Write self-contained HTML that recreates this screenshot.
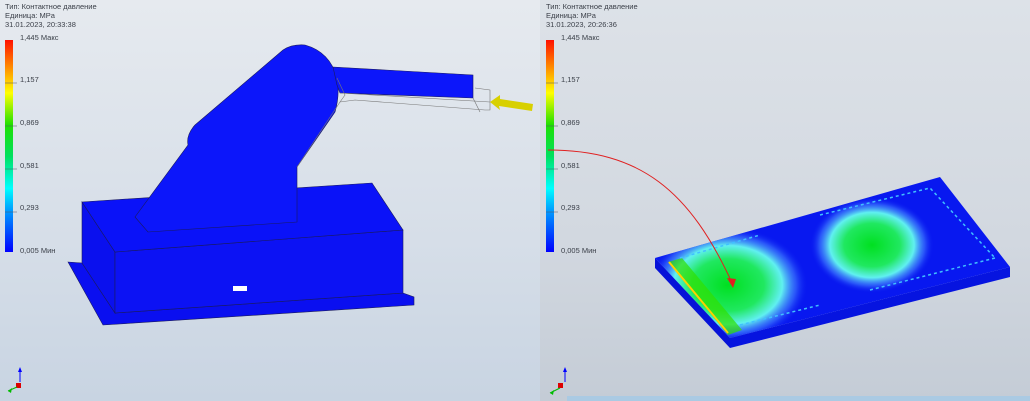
<!DOCTYPE html>
<html><head><meta charset="utf-8"><style>
body{margin:0;width:1030px;height:401px;overflow:hidden;font-family:"Liberation Sans","DejaVu Sans",sans-serif}
.p{position:absolute;top:0;height:401px}
.t{position:absolute;font-size:7.5px;color:#3a3f48;line-height:9px;white-space:nowrap}
</style></head><body>
<div class="p" style="left:0;width:540px;background:linear-gradient(180deg,#e6eaef 0%,#d6dee8 60%,#c8d4e2 100%)"></div>
<div class="p" style="left:540px;width:490px;background:linear-gradient(180deg,#dde2e8 0%,#d2d8e0 60%,#c4ccd6 100%)"></div>
<svg width="1030" height="401" style="position:absolute;left:0;top:0">
<defs>
<linearGradient id="lg" x1="0" y1="1" x2="0" y2="0">
<stop offset="0" stop-color="#0000ff"/><stop offset="0.2" stop-color="#00a0ff"/><stop offset="0.3" stop-color="#00ffff"/><stop offset="0.45" stop-color="#00e060"/><stop offset="0.6" stop-color="#20e000"/><stop offset="0.75" stop-color="#ffff00"/><stop offset="0.85" stop-color="#ffa000"/><stop offset="1" stop-color="#ff1000"/>
</linearGradient>
<radialGradient id="hs"><stop offset="0" stop-color="#00e020"/><stop offset="0.45" stop-color="#20e860"/><stop offset="0.68" stop-color="#60f0f0"/><stop offset="0.85" stop-color="#4080ff" stop-opacity="0.6"/><stop offset="1" stop-color="#0818f0" stop-opacity="0"/></radialGradient>
<clipPath id="pc"><polygon points="655,258 940,177 1010,267 730,338"/></clipPath>
</defs>
<rect x="5" y="40" width="8" height="212" fill="url(#lg)"/>
<rect x="546" y="40" width="8" height="212" fill="url(#lg)"/>
<g stroke="#556" stroke-width="0.5"><line x1="5" y1="83" x2="17" y2="83"/><line x1="5" y1="126" x2="17" y2="126"/><line x1="5" y1="169" x2="17" y2="169"/><line x1="5" y1="212" x2="17" y2="212"/>
<line x1="546" y1="83" x2="558" y2="83"/><line x1="546" y1="126" x2="558" y2="126"/><line x1="546" y1="169" x2="558" y2="169"/><line x1="546" y1="212" x2="558" y2="212"/></g>
<!-- robot -->
<g stroke="#1a1a60" stroke-width="0.6">
<polygon points="68,262 82,263 115,313 403,293 414,297 414,305 103,325" fill="#0a0ff0"/>
<polygon points="82,202 115,252 115,313 82,263" fill="#0a10ee"/>
<polygon points="115,252 403,230 403,293 115,313" fill="#0c12f4"/>
<polygon points="82,202 372,183 403,230 115,252" fill="#0a12f8"/>
<path d="M135,217 L148,232 L297,222 L297,167 L335,112 Q340,95 337,78 Q330,52 305,45 Q292,44 283,50 L195,125 Q186,135 188,145 L135,217 Z" fill="#0c16fa"/>
<polygon points="333,67 473,75 473,98 340,93 337,85" fill="#0c16fa"/>
</g>
<g fill="none" stroke="#777" stroke-width="0.6">
<polyline points="297,167 340,102 355,100 485,110 490,110 490,90 475,88"/>
<polyline points="340,93 490,102"/><polyline points="473,98 480,112"/>
<polyline points="337,78 345,95 340,102"/>
</g>
<rect x="233" y="286" width="14" height="5" fill="#fff"/>
<polygon points="490,102 500,95 500,99 533,104 532,111 499,106 500,110" fill="#d8d000"/>
<!-- plate -->
<polygon points="655,258 730,338 730,348 655,268" fill="#0612d8"/>
<polygon points="730,338 1010,267 1010,277 730,348" fill="#0614e0"/>
<polygon points="655,258 940,177 1010,267 730,338" fill="#0818f0"/>
<g clip-path="url(#pc)">
<ellipse cx="728" cy="285" rx="80" ry="58" fill="url(#hs)"/>
<ellipse cx="872" cy="245" rx="62" ry="48" fill="url(#hs)"/>
<polygon points="668,262 682,258 742,330 728,335" fill="#30e000" opacity="0.7"/>
</g>
<line x1="669" y1="262" x2="728" y2="333" stroke="#ffd000" stroke-width="2"/>
<g stroke="#40c0ff" stroke-width="1.5" stroke-dasharray="3,3" fill="none">
<polyline points="680,258 760,235"/><polyline points="820,215 930,188 995,258"/>
<polyline points="740,325 820,305"/><polyline points="870,290 995,258"/>
</g>
<path d="M548,150 C640,150 690,190 733,285" fill="none" stroke="#e02020" stroke-width="1"/>
<polygon points="733,288 727,278 736,279" fill="#e02020"/>
<g><line x1="20" y1="382" x2="20" y2="372" stroke="#00f"/><polygon points="18,372 22,372 20,367" fill="#00f"/><rect x="16" y="383" width="5" height="5" fill="#d00"/><line x1="8" y1="391" x2="17" y2="387" stroke="#0b0"/><polygon points="8,391 12,388 11,393" fill="#0b0"/></g>
<g><line x1="565" y1="382" x2="565" y2="372" stroke="#00f"/><polygon points="563,372 567,372 565,367" fill="#00f"/><rect x="558" y="383" width="5" height="5" fill="#d00"/><line x1="550" y1="393" x2="560" y2="388" stroke="#0b0"/><polygon points="550,393 554,390 553,395" fill="#0b0"/></g>
<rect x="567" y="396" width="463" height="5" fill="#90c8f0" opacity="0.5"/>
</svg>
<div class="t" style="left:5px;top:2px">Тип: Контактное давление<br>Единица: MPa<br>31.01.2023, 20:33:38</div>
<div class="t" style="left:20px;top:33px">1,445 Макс</div>
<div class="t" style="left:20px;top:75px">1,157</div>
<div class="t" style="left:20px;top:118px">0,869</div>
<div class="t" style="left:20px;top:161px">0,581</div>
<div class="t" style="left:20px;top:203px">0,293</div>
<div class="t" style="left:20px;top:246px">0,005 Мин</div>
<div class="t" style="left:546px;top:2px">Тип: Контактное давление<br>Единица: MPa<br>31.01.2023, 20:26:36</div>
<div class="t" style="left:561px;top:33px">1,445 Макс</div>
<div class="t" style="left:561px;top:75px">1,157</div>
<div class="t" style="left:561px;top:118px">0,869</div>
<div class="t" style="left:561px;top:161px">0,581</div>
<div class="t" style="left:561px;top:203px">0,293</div>
<div class="t" style="left:561px;top:246px">0,005 Мин</div>
</body></html>
